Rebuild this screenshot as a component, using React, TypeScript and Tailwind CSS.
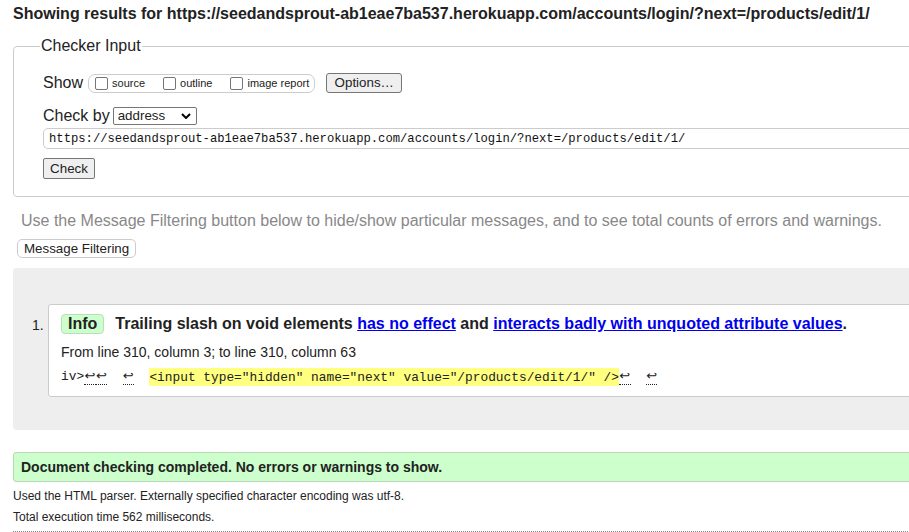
const lf = (
  <span className="inline-block w-[11.5px] border-b border-dotted border-[#222] pb-[1px] text-center font-['DejaVu_Sans',sans-serif] text-[13px] leading-[14px]">
    ↩
  </span>
);

function Checkbox({ label }: { label: string }) {
  return (
    <label className="flex items-center gap-[4px]">
      <span className="inline-block h-[13px] w-[13px] rounded-[2px] border border-[#767676] bg-white" />
      <span className="text-[11px] leading-[13px]">{label}</span>
    </label>
  );
}

export default function App() {
  return (
    <div className="h-[532px] w-[909px] overflow-hidden bg-white font-['Liberation_Sans',Arial,sans-serif] text-[#222]">
      <div className="w-[960px] pl-[13px]">
        <h2 className="pt-[5px] text-[16px] font-bold leading-[18px]">
          Showing results for https://seedandsprout-ab1eae7ba537.herokuapp.com/accounts/login/?next=/products/edit/1/
        </h2>

        <fieldset className="mt-[14px] rounded-[4px] border border-[#ccc] px-[29px] pb-[17px] pt-[18px]">
          <legend className="-ml-[3px] px-[1px] text-[16px] leading-[18px] text-[#222]">Checker Input</legend>

          <div className="flex h-[20px] items-center">
            <span className="text-[16px] leading-[18px]">Show</span>
            <div className="ml-[5px] flex h-[19px] items-center gap-[18px] rounded-[7px] border border-[#ccc] pl-[6px] pr-[5px]">
              <Checkbox label="source" />
              <Checkbox label="outline" />
              <Checkbox label="image report" />
            </div>
            <button className="ml-[11px] h-[20px] w-[76px] rounded-[3px] border border-[#767676] bg-[#efefef] text-[13.33px] leading-[16px]">
              Options…
            </button>
          </div>

          <div className="mt-[14px] flex h-[18px] items-center">
            <span className="text-[16px] leading-[18px]">Check by</span>
            <div className="ml-[3px] flex h-[18px] w-[84px] items-center justify-between rounded-[2px] border border-[#767676] bg-white pl-[4px] pr-[5px]">
              <span className="text-[13.33px] leading-[16px]">address</span>
              <svg width="10" height="6" viewBox="0 0 10 6" aria-hidden="true">
                <path d="M1 1l4 4 4-4" fill="none" stroke="#000" strokeWidth="2" />
              </svg>
            </div>
          </div>

          <div className="mt-[3px] flex h-[21px] items-center rounded-[5px] border border-[#ccc] pl-[5px]">
            <span className="whitespace-pre font-['Liberation_Mono',monospace] text-[12.2px] leading-[16px] text-[#111]">
              https://seedandsprout-ab1eae7ba537.herokuapp.com/accounts/login/?next=/products/edit/1/
            </span>
          </div>

          <button className="mt-[9px] block h-[21px] w-[52px] rounded-[2px] border border-[#767676] bg-[#efefef] text-[13.33px] leading-[16px]">
            Check
          </button>
        </fieldset>

        <p className="ml-[8px] mt-[15px] text-[16px] leading-[18px] text-[#888]">
          Use the Message Filtering button below to hide/show particular messages, and to see total counts of errors and warnings.
        </p>

        <button className="ml-[4px] mt-[9px] block h-[19px] rounded-[5px] border border-[#ccc] bg-white px-[6px] text-[13.33px] leading-[16px]">
          Message Filtering
        </button>

        <div className="mt-[10px] flex rounded-[4px] bg-[#eee] pb-[33px] pt-[36px]">
          <div className="w-[35px] shrink-0 pl-[19px] pt-[13px] text-[14px] leading-[16px]">1.</div>
          <div className="flex-1 rounded-[3px] border border-[#ccc] bg-white pb-[10px] pl-[12px] pt-[9px]">
            <div className="flex h-[20px] items-center text-[16px] font-bold leading-[18px]">
              <span className="flex h-[20px] items-center rounded-[4px] border border-[#b8e0b8] bg-[#ccffcc] px-[6px]">Info</span>
              <span className="ml-[11px] whitespace-pre">
                Trailing slash on void elements{" "}
                <a className="text-[#0000ee] underline">has no effect</a> and{" "}
                <a className="text-[#0000ee] underline">interacts badly with unquoted attribute values</a>.
              </span>
            </div>
            <p className="mt-[10px] text-[14px] leading-[16px]">
              From line 310, column 3; to line 310, column 63
            </p>
            <p className="mt-[8px] whitespace-pre font-['Liberation_Mono',monospace] text-[12.83px] leading-[18px]">
              iv&gt;{lf}{lf}{"  "}{lf}{"  "}
              <mark className="bg-[#ffff80] py-[1.5px] text-[#222]">&lt;input type="hidden" name="next" value="/products/edit/1/" /&gt;</mark>
              {lf}{"  "}{lf}
            </p>
          </div>
        </div>

        <div className="mt-[22px] flex h-[30px] items-center rounded-[3px] border border-[#b8d8b8] bg-[#ccffcc] pl-[7px]">
          <span className="text-[14px] font-bold leading-[16px]">Document checking completed. No errors or warnings to show.</span>
        </div>

        <p className="mt-[7px] text-[12px] leading-[14px]">
          Used the HTML parser. Externally specified character encoding was utf-8.
        </p>
        <p className="mt-[7px] text-[12px] leading-[14px]">Total execution time 562 milliseconds.</p>
        <div className="mt-[7px] border-t border-dotted border-[#888]" />
      </div>
    </div>
  );
}
